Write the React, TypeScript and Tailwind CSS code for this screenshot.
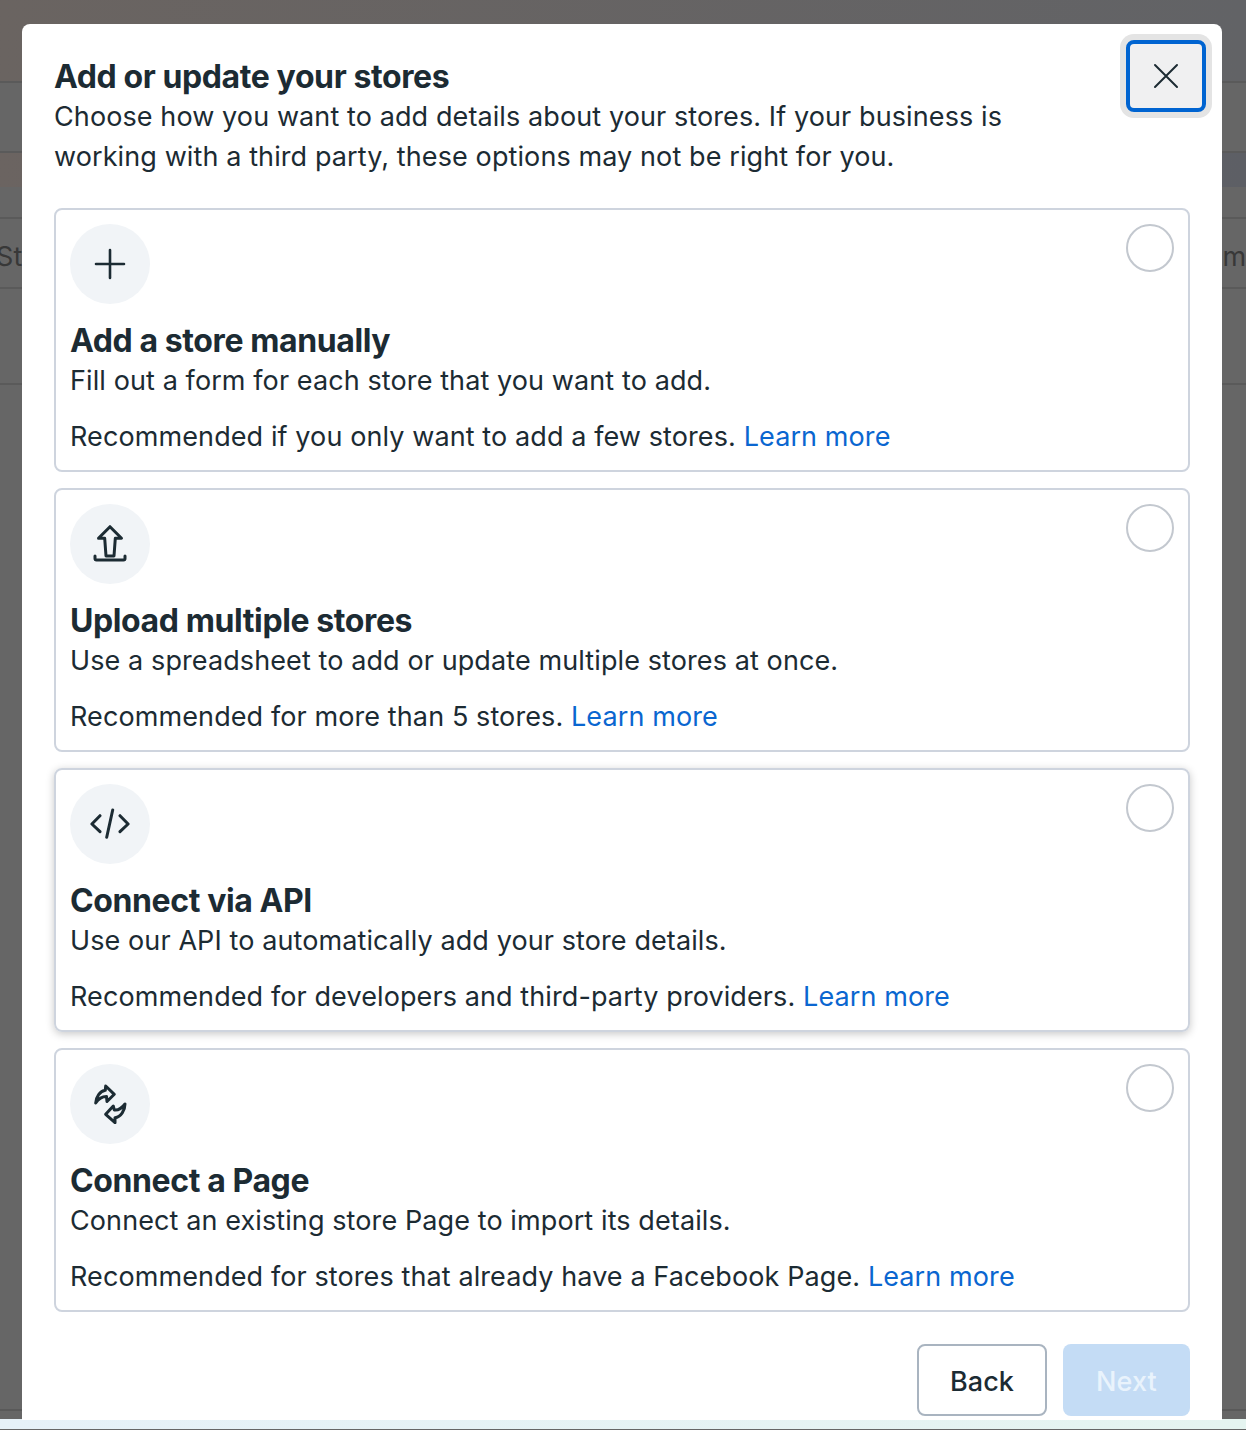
const cards = [
  {
    title: 'Add a store manually',
    desc: 'Fill out a form for each store that you want to add.',
    hint: 'Recommended if you only want to add a few stores.',
    icon: 'plus',
  },
  {
    title: 'Upload multiple stores',
    desc: 'Use a spreadsheet to add or update multiple stores at once.',
    hint: 'Recommended for more than 5 stores.',
    icon: 'upload',
  },
  {
    title: 'Connect via API',
    desc: 'Use our API to automatically add your store details.',
    hint: 'Recommended for developers and third-party providers.',
    icon: 'code',
    hovered: true,
  },
  {
    title: 'Connect a Page',
    desc: 'Connect an existing store Page to import its details.',
    hint: 'Recommended for stores that already have a Facebook Page.',
    icon: 'sync',
  },
];

function CardIcon({ name }: { name: string }) {
  return (
    <svg width="40" height="40" viewBox="0 0 40 40" fill="none" stroke="#1c2b33" strokeWidth={name === 'plus' ? 2.6 : 3} strokeLinecap="round" strokeLinejoin="round">
      {name === 'plus' && <path d="M20 6v28M6 20h28" />}
      {name === 'upload' && (
        <>
          <path d="M20 2.7 31.5 14.3H25.3L24 32H16L14.7 14.3H8.5Z" />
          <path d="M5 32v2.5a1.5 1.5 0 0 0 1.5 1.5h27a1.5 1.5 0 0 0 1.5-1.5V32" />
        </>
      )}
      {name === 'code' && <path d="M10 11.7 1.9 20 10 27.7M30 11.7 38.1 20 30 27.7M22.7 6l-6 27.3" />}
      {name === 'sync' && (
        <>
          <path d="M5.7 19C6 13 10 7 15.3 6.3L15.7 2 24.3 10.3 17 17.5 16.5 12.5C12 12.5 8 15.5 5.7 19Z" />
          <path d="M35 20C35 26 31 33 25 33.7L25 38.7 15.7 30.3 23.3 22 24.3 26C28 26.5 32 24 35 20Z" />
        </>
      )}
    </svg>
  );
}

function StoreCard({ title, desc, hint, icon, hovered }: { title: string; desc: string; hint: string; icon: string; hovered?: boolean }) {
  return (
    <div className={`flex justify-between rounded-lg border-2 border-[#ced4de] p-[14px] ${hovered ? 'shadow-[0_2px_8px_rgba(0,0,0,0.22)]' : ''}`}>
      <div>
        <div className="flex h-20 w-20 items-center justify-center rounded-full bg-[#f1f4f7]">
          <CardIcon name={icon} />
        </div>
        <div className="translate-y-px">
          <div className="mt-4 text-[32px] font-bold tracking-[-0.4px]">{title}</div>
          <div>{desc}</div>
          <div className="mt-4">
            {hint} <a className="text-[#0a66d0]">Learn more</a>
          </div>
        </div>
      </div>
      <div className="h-12 w-12 rounded-full border-2 border-[#c3c8cf] bg-white" />
    </div>
  );
}

export default function App() {
  return (
    <div className="relative h-[1430px] overflow-hidden bg-[#666666] font-['Inter',sans-serif] text-[27px] leading-10 tracking-[0.1px] text-[#1c2b33]">
      <div className="flex h-[1430px] flex-col">
        <div className="h-[83px] border-b-2 border-[#5a5a5a] bg-gradient-to-r from-[#6a6461] to-[#626366]" />
        <div className="h-[70px] border-b-2 border-[#5a5a5a]" />
        <div className="h-[34px] bg-gradient-to-r from-[#6b6461] to-[#5d5f65]" />
        <div className="h-[32px] border-b-2 border-[#5a5a5a]" />
        <div className="flex h-[70px] items-center justify-between border-b-2 border-[#5a5a5a] pt-2 text-[#383838]">
          <span className="ml-[-4px]">Store</span>
          <span className="mr-[-16px]">Name</span>
        </div>
        <div className="h-[96px] border-b-2 border-[#5a5a5a]" />
        <div className="h-[1026px] border-b-2 border-[#595959]" />
        <div className="h-2" />
        <div className="h-[10px] bg-gradient-to-r from-[#e6f1f8] to-[#e5f4f0]" />
      </div>

      <div className="absolute left-[22px] top-[24px] h-[1396px] w-[1200px] rounded-t-lg bg-white px-8 pt-8">
        <div className="translate-y-px pr-[160px]">
          <h2 className="text-[32px] font-bold tracking-[-0.4px]">Add or update your stores</h2>
          <p>Choose how you want to add details about your stores. If your business is working with a third party, these options may not be right for you.</p>
        </div>
        <button className="absolute right-4 top-4 flex h-[72px] w-20 items-center justify-center rounded-lg border-4 border-[#0064d1] bg-[#f0f0f1] shadow-[0_0_0_6px_#e4e4e4]">
          <svg width="26" height="26" viewBox="0 0 26 26" stroke="#1c2b33" strokeWidth="2" strokeLinecap="round">
            <path d="M2 2l22 22M24 2 2 24" />
          </svg>
        </button>

        <div className="mt-8 flex flex-col gap-4">
          {cards.map((c) => (
            <StoreCard key={c.title} {...c} />
          ))}
        </div>

        <div className="mt-8 flex justify-end gap-4">
          <button className="h-[72px] w-[130px] rounded-lg border-2 border-[#a9b4c0] bg-white pt-1 font-medium">Back</button>
          <button className="h-[72px] w-[127px] rounded-lg bg-[#c4dcf5] pt-1 font-medium text-[#e9f3fc]">Next</button>
        </div>
      </div>
    </div>
  );
}
